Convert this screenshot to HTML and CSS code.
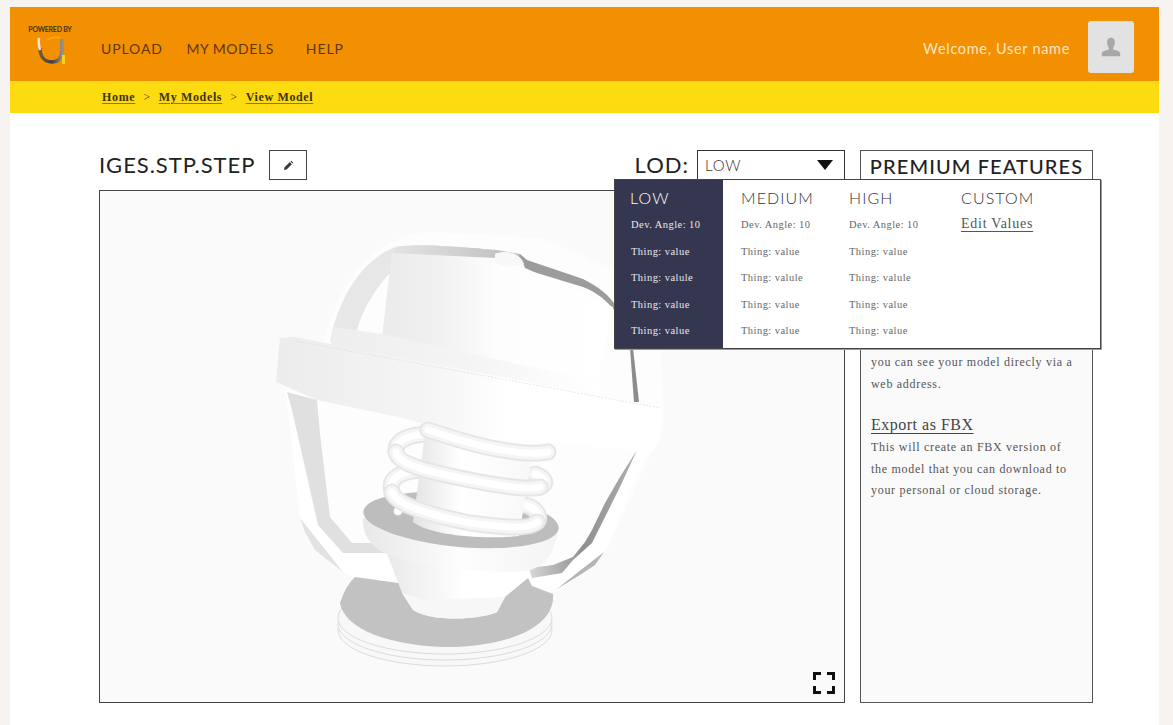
FILE: index.html
```html
<!DOCTYPE html>
<html lang="en">
<head>
<meta charset="utf-8">
<title>View Model</title>
<link rel="stylesheet" href="styles.css">
</head>
<body>
<div class="frame">
  <header class="topbar">
    <div class="logo">
      <span class="logo-text">POWERED BY</span>
      <svg class="logo-mark" viewBox="0 0 30 28" width="30" height="28">
        <defs><linearGradient id="lg" x1="0" y1="0" x2="1" y2="0"><stop offset="0" stop-color="#6d5a3c"/><stop offset="0.55" stop-color="#3f3f3f"/><stop offset="1" stop-color="#8f8f8f"/></linearGradient></defs>
        <path d="M4 12 C4 20 8 26 16 26 C23 26 26 22 26 14 V3" fill="none" stroke="url(#lg)" stroke-width="3.500"/>
        <path d="M3 2 C2 6 3 10 4 14" fill="none" stroke="#f0e3cf" stroke-width="2.500"/>
        <path d="M11 4 C15 1 21 1 25 2" fill="none" stroke="#f9ad00" stroke-width="1.500"/>
        <rect x="26" y="19" width="3" height="9" fill="#fdd20e"/>
      </svg>
    </div>
    <nav class="nav">
      <a class="nav-link nav-upload">UPLOAD</a>
      <a class="nav-link nav-models">MY MODELS</a>
      <a class="nav-link">HELP</a>
    </nav>
    <div class="user">
      <span class="welcome">Welcome, User name</span>
      <div class="avatar">
        <svg viewBox="0 0 24 24" width="22" height="22"><path d="M12 2 C8.600 2 7.600 4.600 7.800 7.600 C8 10.200 9 12 9.800 13 V14.400 C7.500 15.600 3 16 2 18.400 V22 H22 V18.400 C21 16 16.500 15.600 14.200 14.400 V13 C15 12 16 10.200 16.200 7.600 C16.400 4.600 15.400 2 12 2Z" fill="#a8a8a8"/></svg>
      </div>
    </div>
  </header>
  <div class="crumbs">
    <a class="crumb">Home</a><span class="sep">&gt;</span><a class="crumb">My Models</a><span class="sep">&gt;</span><a class="crumb">View Model</a>
  </div>
  <main class="main">
    <section class="left">
      <div class="toolbar">
        <h1 class="title">IGES.STP.STEP</h1>
        <button class="edit" type="button" aria-label="Edit">
          <svg viewBox="0 0 12 12" width="11" height="11"><path d="M1 11 L1.700 8 L7.400 2.300 L9.700 4.600 L4 10.300Z M8.100 1.600 L9 0.800 L11.200 3 L10.400 3.900Z" fill="#3c3c3c"/></svg>
        </button>
        <div class="lod">
          <span class="lod-label">LOD:</span>
          <div class="select"><span>LOW</span><i class="caret"></i></div>
        </div>
      </div>
      <div class="viewer">
        <svg class="model" viewBox="100 191 744 511" preserveAspectRatio="none">
          <defs>
            <linearGradient id="cyl" x1="0" x2="1" y1="0" y2="0"><stop offset="0" stop-color="#ebebeb"/><stop offset="0.25" stop-color="#f1f1f1"/><stop offset="0.5" stop-color="#fdfdfd"/><stop offset="1" stop-color="#fff"/></linearGradient>
            <linearGradient id="collar" x1="0" x2="1" y1="0" y2="0"><stop offset="0" stop-color="#eeeeee"/><stop offset="0.5" stop-color="#f4f4f4"/><stop offset="1" stop-color="#fff"/></linearGradient>
            <linearGradient id="ring" x1="0" x2="1" y1="0" y2="0"><stop offset="0" stop-color="#ececec"/><stop offset="0.4" stop-color="#f5f5f5"/><stop offset="0.6" stop-color="#fff"/></linearGradient>
            <linearGradient id="cone" x1="0" x2="1" y1="0" y2="0"><stop offset="0" stop-color="#e9e9e9"/><stop offset="0.55" stop-color="#fff"/></linearGradient>
            <linearGradient id="flange" x1="0" x2="1" y1="0" y2="0"><stop offset="0" stop-color="#e8e8e8"/><stop offset="0.5" stop-color="#fdfdfd"/><stop offset="1" stop-color="#f4f4f4"/></linearGradient>
            <linearGradient id="wedge" x1="0" x2="1" y1="0" y2="0"><stop offset="0" stop-color="#d8d8d8"/><stop offset="0.5" stop-color="#8f8f8f"/><stop offset="1" stop-color="#b0b0b0"/></linearGradient>
            <linearGradient id="shaft" x1="0" x2="1" y1="0" y2="0"><stop offset="0" stop-color="#e4e4e4"/><stop offset="0.4" stop-color="#fff"/><stop offset="1" stop-color="#f8f8f8"/></linearGradient>
            <linearGradient id="band" x1="0" x2="1" y1="0" y2="0"><stop offset="0" stop-color="#e4e4e4"/><stop offset="1" stop-color="#bdbdbd"/></linearGradient>
          </defs>
          <!-- halo -->
          <path d="M325 340 C340 280 375 235 430 232 L540 238 L640 280 L660 330 L664 420 L652 450 L606 552 L558 592 L398 584 L343 572 L300 518 L286 395 L276 380Z" fill="#fdfdfd"/>
          <!-- back strap -->
          <path d="M330 342 C338 300 360 262 393 248 C405 244 430 244 497 250 L497 258 L420 256 L388 275 C375 290 362 310 357 330Z" fill="#e7e7e7"/>
          <path d="M393 248 C405 244 430 244 497 250 L520 254 L520 262 L395 254Z" fill="url(#band)"/>
          <path d="M520 254 L527 260 L583 279 C600 288 608 294 616 306 L616 312 C606 300 598 293 583 287 L527 270 L516 264Z" fill="#9c9c9c"/>
          <!-- cylinder -->
          <path d="M392 253 L495 258 L495 254 C505 250 520 252 525 268 L613 307 L595 395 L381 345Z" fill="url(#cyl)"/>
          <path d="M495 254 C505 250 520 252 524 264 C515 268 500 267 495 262Z" fill="#f8f8f8"/>
          <path d="M633 348 L639 402 L634 402 L630 348Z" fill="#8c8c8c"/>
          <!-- collar -->
          <path d="M333 327 L382 334 L600 382 L600 400 L330 350Z" fill="url(#collar)"/>
          <!-- left strap -->
          <path d="M287 392 L317 400 L330 517 L352 543 L385 553 L398 582 L353 577 L343 572 L300 518Z" fill="#fff"/>
          <path d="M287 392 L317 400 L320 433 L330 517 L352 543 L378 543 L385 553 L343 553 L318 525 L292 410Z" fill="#e0e0e0"/>
          <path d="M300 518 L343 572 L315 550 L305 532Z" fill="#e2e2e2"/>
          <!-- right strap -->
          <path d="M650 445 L637 450 L592 543 L573 560 L562 573 L532 578 L528 587 L557 589 L604 552Z" fill="#fff"/>
          <path d="M637 450 L620 487 L602 523 L592 543 L573 560 L562 573 L532 578 L529 568 L553 565 L573 557 L585 542 L592 530 L605 503 L620 477Z" fill="url(#wedge)"/>
          <path d="M604 552 L595 565 L583 573 L557 589 L577 573Z" fill="#b5b5b5"/>
          <!-- ring -->
          <path d="M280 338 L295 337 L662 408 C664 425 660 440 653 452 L553 443 L470 437 L403 418 L317 400 L276 382Z" fill="url(#ring)"/>
          <path d="M295 341 L660 408" stroke="#dcdcdc" stroke-width="0.700" stroke-dasharray="2 1.500" fill="none"/>
          <!-- bottom disc -->
          <ellipse cx="445" cy="630" rx="107" ry="36" fill="#f8f8f8" stroke="#dcdcdc" stroke-width="1"/>
          <ellipse cx="445" cy="624" rx="107" ry="36" fill="#f8f8f8" stroke="#dcdcdc" stroke-width="1"/>
          <ellipse cx="445" cy="618" rx="107" ry="36" fill="#f8f8f8" stroke="#dcdcdc" stroke-width="1"/>
          <path d="M340 603 C345 588 350 582 355 577 L398 583 L500 585 L528 578 L532 586 L553 594 C556 630 500 648 443 647 C390 645 345 630 340 603Z" fill="#c2c2c2"/>
          <!-- cone -->
          <path d="M387 553 L530 568 L528 578 L505 597 L497 612 C480 620 430 622 413 610 L402 593Z" fill="url(#cone)"/>
          <path d="M402 593 L425 600 L505 597 L497 612 C480 620 430 622 413 610Z" fill="#f7f7f7"/>
          <!-- flange -->
          <path d="M363 518 C362 535 372 548 387 554 C430 570 510 575 530 570 C548 565 556 548 559 526Z" fill="url(#flange)"/>
          <ellipse cx="461" cy="520" rx="98" ry="27" transform="rotate(5 461 520)" fill="#bdbdbd"/>
          <circle cx="398" cy="511" r="5" fill="#fff" stroke="#c4c4c4" stroke-width="1.500"/>
          <!-- spring, rear turns -->
          <g class="coil-group">
            <path class="coil-a" d="M432 434 C405 434 395 442 396 452 M535 474 C546 478 548 484 540 487"/>
            <path class="coil-b" d="M432 434 C405 434 395 442 396 452 M535 474 C546 478 548 484 540 487"/>
            <path class="coil-c" d="M432 434 C405 434 395 442 396 452 M535 474 C546 478 548 484 540 487"/>
            <path class="coil-a" d="M428 470 C400 470 388 478 392 492 M525 505 C536 508 542 516 537 522"/>
            <path class="coil-b" d="M428 470 C400 470 388 478 392 492 M525 505 C536 508 542 516 537 522"/>
            <path class="coil-c" d="M428 470 C400 470 388 478 392 492 M525 505 C536 508 542 516 537 522"/>
          </g>
          <!-- shaft -->
          <path d="M426 426 L533 450 L519 536 C480 540 430 535 413 522Z" fill="url(#shaft)"/>
          <!-- spring, front turns -->
          <g class="coil-group">
            <path class="coil-a" d="M392 492 C396 505 430 515 470 523 C500 527 530 530 537 522"/>
            <path class="coil-b" d="M392 492 C396 505 430 515 470 523 C500 527 530 530 537 522"/>
            <path class="coil-c" d="M392 492 C396 505 430 515 470 523 C500 527 530 530 537 522"/>
            <path class="coil-a" d="M396 452 C398 465 430 472 470 480 C500 486 530 490 540 487"/>
            <path class="coil-b" d="M396 452 C398 465 430 472 470 480 C500 486 530 490 540 487"/>
            <path class="coil-c" d="M396 452 C398 465 430 472 470 480 C500 486 530 490 540 487"/>
            <path class="coil-a" d="M548 452 C530 456 490 450 450 437 L428 430"/>
            <path class="coil-b" d="M548 452 C530 456 490 450 450 437 L428 430"/>
            <path class="coil-c" d="M548 452 C530 456 490 450 450 437 L428 430"/>
          </g>
        </svg>
        <svg class="fullscreen" viewBox="0 0 22 22" width="22" height="22">
          <path d="M1.500 8 V1.500 H8 M14 1.500 H20.500 V8 M1.500 14 V20.500 H8 M14 20.500 H20.500 V14" fill="none" stroke="#111" stroke-width="3"/>
        </svg>
      </div>
    </section>
    <aside class="panel">
      <h2 class="panel-title">PREMIUM FEATURES</h2>
      <div class="panel-body">
        <p class="feature-text">you can see your model direcly via a web address.</p>
        <a class="feature">Export as FBX</a>
        <p class="feature-text">This will create an FBX version of the model that you can download to your personal or cloud storage.</p>
      </div>
    </aside>
    <div class="menu">
      <div class="col col-low">
        <h3 class="col-title">LOW</h3>
        <p class="item">Dev. Angle: 10</p><p class="item">Thing: value</p><p class="item">Thing: valule</p><p class="item">Thing: value</p><p class="item">Thing: value</p>
      </div>
      <div class="col col-medium">
        <h3 class="col-title">MEDIUM</h3>
        <p class="item">Dev. Angle: 10</p><p class="item">Thing: value</p><p class="item">Thing: valule</p><p class="item">Thing: value</p><p class="item">Thing: value</p>
      </div>
      <div class="col col-high">
        <h3 class="col-title">HIGH</h3>
        <p class="item">Dev. Angle: 10</p><p class="item">Thing: value</p><p class="item">Thing: valule</p><p class="item">Thing: value</p><p class="item">Thing: value</p>
      </div>
      <div class="col col-custom">
        <h3 class="col-title">CUSTOM</h3>
        <a class="edit-values">Edit Values</a>
      </div>
    </div>
  </main>
</div>
</body>
</html>
```
FILE: styles.css
```css
* { box-sizing: border-box; }
html, body { margin: 0; height: 725px; overflow: hidden; }
body { background: #f7f3f0; font-family: "Liberation Serif", serif; color: #333; }
.frame { margin: 7px 14px 0 10px; height: 718px; background: #fff; }

.topbar { height: 74px; padding-top: 6px; background: #f39002; display: flex; align-items: center; font-family: Lato, sans-serif; }
.logo { width: 80px; margin-right: 11px; align-self: flex-start; padding-top: 12px; display: flex; flex-direction: column; align-items: center; }
.logo-text { font-size: 7px; line-height: 8px; font-weight: 700; letter-spacing: -0.250px; color: #4a3416; white-space: nowrap; margin-bottom: 3px; }
.logo-mark { display: block; margin-left: 1px; }
.nav { display: flex; margin-top: 2px; }
.nav-link { font-size: 14px; letter-spacing: 0.900px; color: #5c3703; }
.nav-upload { margin-right: 23.500px; }
.nav-models { margin-right: 32px; letter-spacing: 0.550px; }
.user { margin-left: auto; margin-right: 25px; display: flex; align-items: center; gap: 18px; }
.welcome { font-size: 14.500px; letter-spacing: 0.680px; color: #fde4c4; margin-top: 2px; }
.avatar { width: 46px; height: 52px; background: #e2e2e2; border-radius: 3px; display: flex; align-items: center; justify-content: center; }

.crumbs { height: 32px; background: #fddb11; padding-left: 92px; display: flex; align-items: center; font-size: 12px; font-weight: 700; letter-spacing: 0.650px; color: #3d3208; }
.crumb { text-decoration: underline; text-decoration-color: #8a7a10; text-underline-offset: 2px; }
.sep { margin: 0 8px; font-weight: 400; }

.main { position: relative; padding: 37px 0 0 89px; display: flex; gap: 15px; }
.left { width: 746px; }
.toolbar { height: 40px; display: flex; align-items: flex-start; }
.title { margin: 0; font: 400 22px/30px Lato, sans-serif; letter-spacing: 0.950px; color: #222; }
.edit { width: 38px; height: 30px; margin-left: 14px; background: #fff; border: 1px solid #444; padding: 0; display: flex; align-items: center; justify-content: center; }
.lod { margin-left: auto; display: flex; align-items: flex-start; font-family: Lato, sans-serif; }
.lod-label { font-size: 22px; line-height: 30px; margin-right: 8px; letter-spacing: 1px; color: #222; }
.select { width: 148px; height: 30px; border: 1px solid #333; padding: 0 11px 0 7px; display: flex; align-items: center; justify-content: space-between; font-size: 15px; font-weight: 300; letter-spacing: 0.700px; color: #333; }
.caret { width: 0; height: 0; border-left: 8px solid transparent; border-right: 8px solid transparent; border-top: 10px solid #111; }
.viewer { position: relative; height: 513px; border: 1px solid #444; background: #fafafa; }
.model { display: block; width: 100%; height: 100%; }
.coil-group { fill: none; stroke-linecap: round; }
.coil-a { stroke: #e6e6e6; stroke-width: 17; }
.coil-b { stroke: #f5f5f5; stroke-width: 13; }
.coil-c { stroke: #fff; stroke-width: 7; }
.fullscreen { position: absolute; right: 9px; bottom: 8px; }

.panel { width: 233px; height: 553px; border: 1px solid #555; background: #fafafa; }
.panel-title { margin: 0; height: 33px; border-bottom: 1px solid #555; background: #fff; font: 500 20px/31px Lato, sans-serif; letter-spacing: 1.100px; text-align: center; color: #222; white-space: nowrap; }
.panel-body { padding: 168px 17px 0 10px; }
.feature { display: inline-block; margin: 19px 0 2px; font-size: 16px; line-height: 21px; letter-spacing: 0.500px; color: #444; text-decoration: underline; text-underline-offset: 3px; text-decoration-thickness: 1px; }
.feature-text { margin: 0; font-size: 12px; line-height: 21.500px; letter-spacing: 0.700px; color: #555; }

.menu { position: absolute; left: 604px; top: 66px; width: 487px; height: 170px; background: #fff; border: 1px solid #444; box-shadow: 1px 1px 0 #999; display: flex; }
.col { padding-top: 9px; }
.col-low { width: 108px; padding-left: 16px; background: #35364f; color: #fff; }
.col-medium { width: 108px; padding-left: 18px; }
.col-high { width: 113px; padding-left: 18px; }
.col-custom { flex: 1; padding-left: 17px; }
.col-title { margin: 0 0 6px; font: 300 16px/17px Lato, sans-serif; letter-spacing: 1.100px; color: #333; }
.col-low .col-title { color: #fff; margin-left: -1px; }
.item { margin: 0; height: 26.500px; font-size: 10.500px; line-height: 26.500px; letter-spacing: 0.450px; color: #666; white-space: nowrap; }
.col-low .item { color: #e8e8ee; }
.edit-values { font-size: 14px; line-height: 17px; letter-spacing: 0.750px; color: #555; text-decoration: underline; text-underline-offset: 3px; text-decoration-thickness: 1px; display: inline-block; margin-top: 3px; }
```
